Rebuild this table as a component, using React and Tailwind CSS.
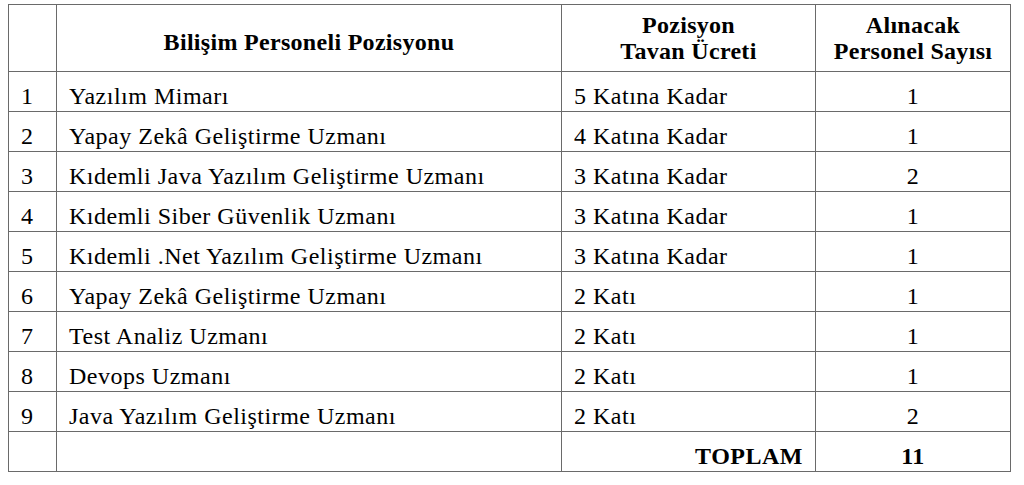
const rows = [
  { no: 1, title: "Yazılım Mimarı", wage: "5 Katına Kadar", count: 1 },
  { no: 2, title: "Yapay Zekâ Geliştirme Uzmanı", wage: "4 Katına Kadar", count: 1 },
  { no: 3, title: "Kıdemli Java Yazılım Geliştirme Uzmanı", wage: "3 Katına Kadar", count: 2 },
  { no: 4, title: "Kıdemli Siber Güvenlik Uzmanı", wage: "3 Katına Kadar", count: 1 },
  { no: 5, title: "Kıdemli .Net Yazılım Geliştirme Uzmanı", wage: "3 Katına Kadar", count: 1 },
  { no: 6, title: "Yapay Zekâ Geliştirme Uzmanı", wage: "2 Katı", count: 1 },
  { no: 7, title: "Test Analiz Uzmanı", wage: "2 Katı", count: 1 },
  { no: 8, title: "Devops Uzmanı", wage: "2 Katı", count: 1 },
  { no: 9, title: "Java Yazılım Geliştirme Uzmanı", wage: "2 Katı", count: 2 },
];

const cell = "border-[1.5px] border-[#6a6a6a] h-10 px-3 pt-2 pb-0 align-middle font-[family-name:Liberation_Serif] text-[24px] leading-6 tracking-[0.5px] text-black";
const head = "border-[1.5px] border-[#6a6a6a] text-center align-middle font-[family-name:Liberation_Serif] font-bold text-[24px] leading-[26px] tracking-[0.3px] text-black";

export default function App() {
  return (
    <div className="min-h-screen bg-white pt-1 pl-2 font-[family-name:Liberation_Serif]">
      <table className="w-[1002px] table-fixed border-collapse font-[family-name:Liberation_Serif]">
        <colgroup>
          <col className="w-[48px]" />
          <col className="w-[505px]" />
          <col className="w-[254px]" />
          <col className="w-[195px]" />
        </colgroup>
        <thead>
          <tr className="h-[67px]">
            <th className={head}></th>
            <th className={head + " pt-2"}>Bilişim Personeli Pozisyonu</th>
            <th className={head}>
              Pozisyon
              <br />
              Tavan Ücreti
            </th>
            <th className={head}>
              Alınacak
              <br />
              Personel Sayısı
            </th>
          </tr>
        </thead>
        <tbody>
          {rows.map((r) => (
            <tr key={r.no}>
              <td className={cell}>{r.no}</td>
              <td className={cell}>{r.title}</td>
              <td className={cell}>{r.wage}</td>
              <td className={cell + " text-center"}>{r.count}</td>
            </tr>
          ))}
          <tr>
            <td className={cell}></td>
            <td className={cell}></td>
            <td className={cell + " text-right font-bold"}>TOPLAM</td>
            <td className={cell + " text-center font-bold"}>11</td>
          </tr>
        </tbody>
      </table>
    </div>
  );
}
